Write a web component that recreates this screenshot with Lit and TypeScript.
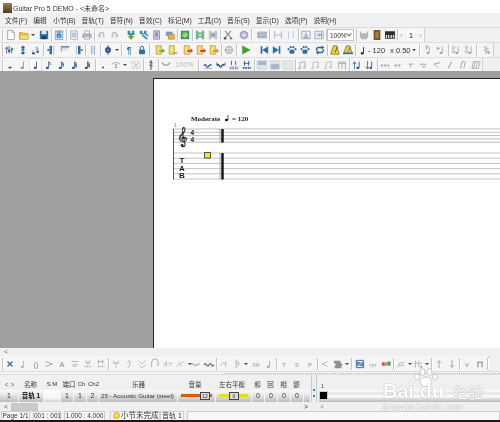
import { LitElement, html, css, svg } from "lit";
import { customElement } from "lit/decorators.js";

const BLUE = "#2a6ea6", TEAL = "#3c8fa6", NAVY = "#2f4f80", DG = "#8a8a8a";

const note = (c: string, flags = 0, x = 5) => svg`
  <ellipse cx=${x} cy="9.5" rx="1.8" ry="1.3" fill=${c}/>
  <path d="M${x + 1.6} 9.5V2" stroke=${c} stroke-width="1" fill="none"/>
  ${flags > 0 ? svg`<path d="M${x + 1.6} 2q3 2 2 4" stroke=${c} fill="none"/>` : ""}
  ${flags > 1 ? svg`<path d="M${x + 1.6} 4q3 2 2 4" stroke=${c} fill="none"/>` : ""}
  ${flags > 2 ? svg`<path d="M${x + 1.6} 6q2.5 1 2 3" stroke=${c} fill="none"/>` : ""}`;
const yellowDoc = (c: string) => svg`
  <path d="M1.5 1h6v10h-6z" fill="#f6df7a" stroke="#b89a30"/>
  <path d="M5 6h4V4l3 3-3 3V8H5z" fill=${c}/>`;
const beam = (c: string) => svg`
  <path d="M2.5 3v7M8.5 2v7M2.5 3l6-1" stroke=${c} fill="none" stroke-width="1.2"/>
  <ellipse cx="1.6" cy="10" rx="1.5" ry="1.1" fill=${c}/><ellipse cx="7.6" cy="9" rx="1.5" ry="1.1" fill=${c}/>`;
const paw = svg`<ellipse cx="6" cy="8" rx="3.2" ry="2.6" fill=${BLUE}/>
  <circle cx="1.8" cy="5" r="1.3" fill=${BLUE}/><circle cx="4.4" cy="2.6" r="1.3" fill=${BLUE}/>
  <circle cx="7.6" cy="2.6" r="1.3" fill=${BLUE}/><circle cx="10.2" cy="5" r="1.3" fill=${BLUE}/>`;
const gtxt = (t: string, c = DG, size = 6) => svg`<text x="6" y="9" text-anchor="middle" font-size=${size} font-family="Liberation Sans" fill=${c} font-weight="bold">${t}</text>`;

const ICONS: Record<string, unknown> = {
  doc: svg`<path d="M2 .5h5.5l2.5 2.5v8.500H2z" fill="#fff" stroke="#9a9a9a"/><path d="M7.500.5V3H10" fill="#ddd" stroke="#9a9a9a"/>`,
  folder: svg`<path d="M.5 3h4l1 1h5v7H.5z" fill="#e6c64a" stroke="#c7a52c"/><path d="M2 6h10l-1.500 5H.5z" fill="#f7e27a" stroke="#d1b238"/>`,
  save: svg`<path d="M1 1h10v10H1z" fill=${BLUE}/><path d="M3 1h6v4H3z" fill="#dfe9f3"/><path d="M3.500 7.500h5V11h-5z" fill="#173f66"/>`,
  info: svg`<path d="M1.500 1h9v10.500h-9z" fill="#cfe0f0" stroke="#7fa3c4"/><circle cx="6" cy="7" r="3" fill="#2f80c8"/><path d="M3 2.500h6" stroke=${BLUE}/><path d="M6 6v3" stroke="#fff"/>`,
  gdoc: svg`<path d="M2 1h8v10.500H2z" fill="#e9eef2" stroke="#a8b4bf"/><path d="M4 4h4v4H4z" fill="none" stroke="#a8b4bf"/><path d="M6 2.500v7M3.500 6h5" stroke="#b9c3cc"/>`,
  print: svg`<path d="M3 1h6v4H3z" fill="#f2f2f2" stroke="#aaa"/><path d="M1 5h10v4H1z" fill="#b4bcc4" stroke="#9aa3ab"/><path d="M3 8h6v3H3z" fill="#f2f2f2" stroke="#aaa"/>`,
  undo: svg`<path d="M3 9V5.500A2.500 2.500 0 0 1 8 5.500V9" stroke="#c2c2c2" stroke-width="2" fill="none"/><path d="M.5 6l2.500 3 2.500-3z" fill="#c2c2c2"/>`,
  redo: svg`<path d="M3 9V5.500A2.500 2.500 0 0 1 8 5.500V9" stroke="#c2c2c2" stroke-width="2" fill="none"/><path d="M5.500 6l2.500 3 2.500-3z" fill="#c2c2c2"/>`,
  addn: svg`<path d="M2 1h3v3h2V1h3v5H2z" fill=${TEAL}/><path d="M6 5v6M3 8h6" stroke="#55a530" stroke-width="2.400"/>`,
  arrn: svg`<path d="M1 1h3v3h2V1h3v4H1z" fill=${TEAL}/><path d="M4 6l6 5" stroke="#4b86c4" stroke-width="2.200"/><path d="M7 5h4v3z" fill="#4b86c4"/>`,
  pn: svg`<path d="M2 1h7v10H2z" fill="#c9c4e2" stroke="#8f88bd"/><path d="M4 3h3v5H4z" fill="#7a8fc0"/>`,
  on: svg`<path d="M1 2h8v5H1z" fill="#6ba0c4"/><path d="M4 5h7v6H4z" fill="#f0b050" stroke="#c88a2c"/>`,
  gchk: svg`<path d="M1 1h10v10H1z" fill="#3a8f7a"/><circle cx="6" cy="6" r="3.500" fill="#6ed04a"/><path d="M4 6l1.500 1.500L8 4.500" stroke="#fff" fill="none"/>`,
  splus: svg`<path d="M1 1h3v2h4V1h3v10H8V9H4v2H1z" fill="#7fa9b8"/><circle cx="6" cy="6" r="3" fill="#62b840"/><path d="M6 4v4M4 6h4" stroke="#fff"/>`,
  sx: svg`<path d="M1 1h3v2h4V1h3v10H8V9H4v2H1z" fill="#b9c2c6"/><path d="M4 4l4 4M8 4l-4 4" stroke="#8f989c" stroke-width="1.500"/>`,
  scis: svg`<path d="M2.500 1L9 9M9.500 1L3 9" stroke="#7a8a96" stroke-width="1.300"/><circle cx="2.500" cy="10" r="1.600" fill="#555"/><circle cx="9.500" cy="10" r="1.600" fill="#c8762c"/>`,
  gear: svg`<circle cx="6" cy="6" r="4.500" fill="#b3b3dc" stroke="#9090c2" stroke-width="1.500" stroke-dasharray="2 1"/><circle cx="6" cy="6" r="2" fill="#e4e4f4"/>`,
  grid: svg`<path d="M1 2.500h10v7H1z" fill="#d7dfe6" stroke="#8fa1b2"/><path d="M1 6h10M1 4.200h10M1 7.800h10" stroke="#8fa1b2"/>`,
  hbar: svg`<path d="M2 1.500v9M10 1.500v9M2 6h8" stroke="#a8bbd0" stroke-width="1.200" fill="none"/>`,
  ibar: svg`<path d="M3 1.500v9M8.500 1.500v9" stroke="#b4c2d2" stroke-width="1" fill="none"/>`,
  dnbox: svg`<path d="M1 1.500h10v9H1z" fill="#eef2f6" stroke="#8fa5ba"/><path d="M6 3v4M4 5.500L6 8l2-2.500M3 9h6" stroke="#6f8aa4" fill="none"/>`,
  rtbox: svg`<path d="M1 1.500h10v9H1z" fill="#eef2f6" stroke="#8fa5ba"/><path d="M3 6h4M5.500 4L8 6 5.500 8M9 3v6" stroke="#6f8aa4" fill="none"/>`,
  cat: svg`<path d="M1 1l2.500 3h5L11 1v7l-2 3H3L1 8z" fill="#b6b6b6"/>`,
  wood: svg`<path d="M2 0h8v12H2z" fill="#7a5322"/><path d="M4 2h4v8H4z" fill="#a87a3c"/>`,
  piano: svg`<path d="M0 1.500h12v9H0z" fill="#2e2e2e"/><path d="M1 6h1.500v3.500H1zM3.700 6h1.500v3.500H3.700zM6.800 6h1.500v3.500H6.800zM9.500 6H11v3.500H9.500z" fill="#e6e6e6"/>`,
  chord: svg`<path d="M2 2v8M5 1v9M8 3v7" stroke=${NAVY} fill="none"/><circle cx="2" cy="4" r="1.500" fill=${TEAL}/><circle cx="5" cy="7" r="1.500" fill=${NAVY}/><circle cx="8.500" cy="5" r="1.500" fill=${TEAL}/>`,
  eigh: svg`<path d="M6 0v12" stroke="#a8b4bf"/><ellipse cx="6" cy="3" rx="2" ry="1.500" fill=${NAVY}/><ellipse cx="6" cy="6" rx="2" ry="1.500" fill=${TEAL}/><ellipse cx="6" cy="9.500" rx="2" ry="1.500" fill=${NAVY}/>`,
  dot3: svg`<path d="M2 11V5M6 8V2" stroke="#5a7a9c" stroke-dasharray="1 1"/><circle cx="3" cy="10" r="1.500" fill=${NAVY}/><circle cx="8" cy="8" r="1.500" fill=${NAVY}/><path d="M6 2q3 1 2 4" stroke="#5a7a9c" fill="none"/>`,
  bl: svg`<path d="M3 1h3v10H3z" fill=${BLUE}/><path d="M7.500 1h1v10h-1z" fill="#9bb9d4"/><path d="M.5 5h2v2h-2z" fill=${NAVY}/>`,
  btop: svg`<path d="M1 1h1.200v7H1z" fill="#7da3c4"/><path d="M2 1.500h9v1.500H2z" fill=${BLUE}/><path d="M3 5h6" stroke="#9bb9d4"/>`,
  br: svg`<path d="M6 1h3v10H6z" fill=${BLUE}/><path d="M3.500 1h1v10h-1z" fill="#9bb9d4"/><path d="M9.500 5h2v2h-2z" fill=${NAVY}/>`,
  bs: svg`<path d="M4 1h1.200v10H4zM7 1h1.200v10H7z" fill="#7da3c4"/>`,
  dots: svg`<circle cx="6" cy="6" r="3.500" fill=${NAVY}/><circle cx="6" cy="6" r="1.300" fill="#c4d4e4"/><path d="M6 0v12" stroke=${NAVY}/>`,
  pil: svg`<text x="6" y="10" text-anchor="middle" font-size="10" font-weight="bold" font-family="Liberation Sans" fill=${BLUE}>¶</text>`,
  lock: svg`<path d="M2.500 5.500h7V11h-7z" fill=${BLUE}/><path d="M4 5.500V3.500a2 2 0 0 1 4 0v2" stroke=${BLUE} fill="none" stroke-width="1.200"/>`,
  ygreen: yellowDoc("#6ab52a"),
  yline: svg`<path d="M1.500 1h6v10h-6z" fill="#f6df7a" stroke="#b89a30"/><path d="M6 9h5v1.500H6z" fill="#888"/>`,
  yred: yellowDoc("#e0452c"),
  yred2: yellowDoc("#d83a3a"),
  yorange: yellowDoc("#ec8a2a"),
  circ: svg`<path d="M.5 5h11v2.500H.5z" fill="#c8c8c8"/><circle cx="6" cy="6" r="4" fill="none" stroke="#b4b4b4" stroke-width="1.500"/><path d="M6 1v10" stroke="#b4b4b4"/>`,
  play: svg`<path d="M1.500 .5L11.500 6l-10 5.500z" fill="#3ea52a"/>`,
  prev: svg`<path d="M2 1.500h2v9H2zM11 1.500v9L4 6z" fill=${BLUE}/>`,
  next: svg`<path d="M8 1.500h2v9H8zM1 1.500v9L8 6z" fill=${BLUE}/>`,
  paw,
  loop: svg`<path d="M2 7V5a2 2 0 0 1 2-2h5" stroke=${BLUE} stroke-width="1.800" fill="none"/><path d="M10 5v2a2 2 0 0 1-2 2H3" stroke=${BLUE} stroke-width="1.800" fill="none"/><path d="M8 .5l3 2.500-3 2.500zM4 6.500L1 9l3 2.500z" fill=${NAVY}/>`,
  met: svg`<path d="M4 1h4l3 10H1z" fill="#f0d030" stroke="#8a7a2a"/><path d="M6 9l3-7" stroke="#444"/>`,
  met2: svg`<path d="M4 1h4l3 9H1z" fill="#f0d030" stroke="#7a7a5a"/><path d="M0 10h12" stroke="#3c6ea8" stroke-width="2"/><path d="M6 8l3-6" stroke="#3c6ea8"/>`,
  mn1: svg`<path d="M4 1.500h1v3H4zM3 1.500h3" stroke="#9aa4ae" fill="none"/>${note("#9aa4ae", 0, 6)}`,
  mn2: svg`<path d="M1 2l4 2-4 2z" fill="#9aa4ae"/>${note("#9aa4ae", 0, 6)}`,
  mn3: svg`<circle cx="3" cy="3" r="1.500" fill="none" stroke="#9aa4ae"/><circle cx="3" cy="8" r="1.500" fill="none" stroke="#9aa4ae"/>${note("#9aa4ae", 0, 7)}`,
  mn5: svg`<path d="M5 1v10M2 3l6 2M2 6l6 2" stroke="#9aa4ae" fill="none"/><circle cx="8" cy="9" r="1.500" fill="#9aa4ae"/>`,
  n0: svg`<ellipse cx="6" cy="9" rx="1.800" ry="1.200" fill=${NAVY}/>`,
  n2: note("#7a8fa8"),
  n4: note(NAVY),
  n8: note(NAVY, 1, 4),
  n16: note(NAVY, 2, 4),
  n32: note(NAVY, 3, 4),
  n64: note("#24466f", 3, 4),
  dot: svg`<circle cx="6" cy="9" r="1.200" fill=${NAVY}/>`,
  tup: svg`<path d="M1 5q5-4 10 0" stroke="#8ca2b8" fill="none"/><text x="6" y="10" text-anchor="middle" font-size="6" font-family="Liberation Sans" fill=${BLUE}>3</text>`,
  rest: svg`<path d="M1 2h10v8H1z" fill="none" stroke="#c2c2c2" stroke-dasharray="2 1"/><path d="M3 3l6 6M9 3l-6 6" stroke="#b4b4b4"/>`,
  flip: svg`<path d="M6 0v12M4 2.500l4 1M4 6l4 1" stroke=${NAVY} stroke-width="1.200"/>`,
  slur: svg`<path d="M1 3q5 7 10 0" stroke=${DG} stroke-width="1.300" fill="none"/>`,
  bxa: svg`<path d="M1 7q2-3 3 0t3 0 3 0" stroke=${NAVY} fill="none" stroke-width="1.400"/><path d="M2 10h9" stroke="#8ca2b8"/>`,
  bxb: svg`<path d="M1 7q2-3 3 0t3 0 3 0" stroke=${NAVY} fill="none" stroke-width="1.800"/><path d="M1 3v3M11 3v3" stroke=${NAVY}/>`,
  bxc: svg`<path d="M3 1v5M8 1v5" stroke=${NAVY}/><path d="M1 8.500h10M1 10.500h10" stroke=${NAVY} stroke-dasharray="2 1"/>`,
  bxd: svg`<path d="M3 1v6M8 1v6M2 4h7" stroke=${NAVY} fill="none"/><path d="M1 9.500h10" stroke=${NAVY} stroke-width="2" stroke-dasharray="2 1"/>`,
  box1: svg`<path d="M0 1h12v10H0z" fill="#dde3ea" stroke="#cfd6de"/><path d="M1 1h10v5H1z" fill="#a8b8cc"/>`,
  box2: svg`<path d="M0 1h12v10H0z" fill="#dde3ea" stroke="#cfd6de"/><path d="M1 5h10v6H1z" fill="#a8b8cc"/>`,
  box3: svg`<path d="M0 1h12v10H0z" fill="#e3e8ee" stroke="#cfd6de"/>`,
  bn1: beam("#aab4be"), bn2: beam("#b8c0c8"),
  rr: svg`<path d="M1 2.500h10M1 4h10" stroke="#9aa4ae"/><path d="M2 4v7M6 4v7M10 4v7" stroke="#9aa4ae"/>`,
  arup: svg`<path d="M3 11V3M1 5l2-3 2 3" stroke=${BLUE} fill="none"/>${note(NAVY, 0, 7)}`,
  ardn: svg`<path d="M3 1v9M1 8l2 3 2-3" stroke=${BLUE} fill="none"/><path d="M8 2v7" stroke=${NAVY}/><circle cx="7" cy="9.500" r="1.400" fill=${NAVY}/>`,
  ff: svg`<path d="M1 6h3M5 6h3M9 6h2" stroke="#a0a8b0" stroke-width="1.500"/><path d="M1 6l2 3M5 6l2 3M9 6l2 3" stroke="#a0a8b0"/>`,
  f2: svg`<path d="M2 6h3M6 6h3" stroke="#a0a8b0" stroke-width="1.500"/><path d="M2 6l2 3M6 6l2 3" stroke="#a0a8b0"/>`,
  f1: svg`<path d="M4 5h4" stroke="#a0a8b0" stroke-width="1.500"/><path d="M4 5l2 4" stroke="#a0a8b0"/>`,
  f3: svg`<path d="M1 5h8M4 8h4" stroke="#a0a8b0" stroke-width="1.300"/>`,
  f4: svg`<path d="M2 5l8-2M3 5l4 4" stroke="#a0a8b0" stroke-width="1.200" fill="none"/>`,
  f5: svg`<path d="M4 10l4-8" stroke="#a0a8b0" stroke-width="1.300"/>`,
  f6: svg`<path d="M3 10l2-8h3M7 10l2-8" stroke="#a0a8b0" stroke-width="1.200" fill="none"/>`,
  f7: svg`<path d="M1 10l2-8h8l-2 8zM5 2l-2 8M8 2l-2 8" stroke="#a0a8b0" fill="none"/>`,
  xx: svg`<path d="M3 3l6 6M9 3l-6 6" stroke=${BLUE} stroke-width="1.500"/>`,
  ln: note("#b8b0a0"),
  par: gtxt("()", "#a8a8a8", 9),
  acc: svg`<path d="M2 3l8 3-8 3" stroke="#a8a8a8" fill="none" stroke-width="1.200"/>`,
  aa: gtxt("A", "#a8a8a8", 9),
  h1: svg`<path d="M2 3h8" stroke="#a8a8a8"/><text x="6" y="10" text-anchor="middle" font-size="6" font-family="Liberation Sans" fill="#a0a8b0">ah</text>`,
  h2: svg`<path d="M3 2l3 2 3-2M3 4l3 2 3-2" stroke="#a0a8b0" fill="none"/><path d="M2 9h8" stroke="#a0a8b0" stroke-width="2" stroke-dasharray="1.500 1"/>`,
  h3: svg`<path d="M3 1v5M8 1v5M2 3h7" stroke="#a0a8b0" fill="none"/><path d="M2 9h8" stroke="#a0a8b0" stroke-width="2" stroke-dasharray="1.500 1"/>`,
  j1: svg`<path d="M2 2l4 3 4-3M2 5h8M6 5v6" stroke="#b4b4b4" fill="none"/>`,
  j2: svg`<path d="M4 11q5-3 2-9M6 2L3.500 4M6 2l2.500 2" stroke="#b4b4b4" fill="none"/>`,
  j3: svg`<path d="M2 2l4 4 4-4M2 7l4 4 4-4" stroke="#b4b4b4" fill="none"/>`,
  j4: svg`<path d="M2 10V4a3 3 0 0 1 8 0v4l-2-2" stroke="#b4b4b4" fill="none" stroke-width="1.200"/>`,
  j5: svg`<path d="M1 9l3-6v6M7 5h4l-4 4" stroke="#b4b4b4" fill="none"/>`,
  j6: svg`<path d="M1 9l4-5 1 5M7 4h3" stroke="#b4b4b4" fill="none"/>`,
  w1: svg`<path d="M1 7q1.500-3 3 0t3 0 3 0" stroke="#7a8288" fill="none" stroke-width="1.200"/>`,
  w2: svg`<path d="M0 7q1.500-3 3 0t3 0 3 0 3 0" stroke="#596a74" fill="none" stroke-width="1.500"/>`,
  l1: svg`<path d="M2 8l3-4 4 2M8 3v6" stroke="#b4b4b4" fill="none"/>`,
  l2: svg`<path d="M5 1v10M5 3q5 1 2 5" stroke="#b4b4b4" fill="none" stroke-width="1.300"/>`,
  rm: gtxt("RM", "#bdbdbd", 5.5),
  sn: note("#a8a8a8"),
  tt: gtxt("T", "#aaa", 7), ss: gtxt("S", "#aaa", 7), pp: gtxt("P", "#aaa", 7),
  lt: svg`<path d="M9 3L3 6l6 3" stroke="#aaa" fill="none"/>`,
  stack: svg`<path d="M1 2h8v3H1zM3 5h8v3H3zM2 8h8v3H2z" fill="#8b9094"/>`,
  bb: svg`<path d="M1 1h10v10H1z" fill="#5c87b8"/><path d="M3 3h6L3 9h6" stroke="#fff" fill="none"/>`,
  txt: gtxt("TXT", "#aaa", 5),
  rgb: svg`<path d="M1 4h3.500v4H1z" fill="#e04a3a"/><path d="M4.500 4H8v4H4.500z" fill="#999"/><path d="M8 3h3.500v5H8z" fill="#4aa83a"/>`,
  up: svg`<path d="M6 11V2M3.500 4.500L6 2l2.500 2.500" stroke="#9a9a9a" fill="none"/>`,
  dn: svg`<path d="M6 1v9M3.500 7.500L6 10l2.500-2.500" stroke="#9a9a9a" fill="none"/>`,
  vv: gtxt("V", "#aaa", 7),
  sq: svg`<path d="M2.500 3h7v7h-2V5h-3v5h-2z" fill="#aaa"/>`,
  gf: svg`<path d="M2 10l3-6 3 2 2-3M3 8h7" stroke="#aab0b4" fill="none"/>`,
  gn: svg`<path d="M3 2v8M7 2v8M1 5h10" stroke="#aab0b4" fill="none"/><path d="M9 8h2v3H9z" fill="#aab0b4"/>`,
};

const ROW1 = "_1 | _1 doc folder dd _1 save | info | gdoc print | undo redo _3 addn arrn pn on | gchk | splus sx | scis _3 gear | _3 grid | _1 hbar ibar | dnbox rtbox | ZOOM | cat wood piano | PAGER";
const ROW2 = "_1 | chord eigh dot3 | _1 bl btop br | bs | dots dd | pil lock | _3 ygreen yline _2 yred yred2 yorange | circ | _2 play _5 prev next _2 paw paw _2 loop | met met2 | SPEED | _1 mn1 mn2 | mn3 mn3 | _3 mn5";
const ROW3 = "_1 | n0 n2 N4S n8 n16 n32 n64 | dot tup dd _1 rest | flip | slur PCT | _2 bxa bxb bxc bxd | box1 box2 box3 | bn1 bn2 bn2 rr | arup ardn | ff f2 f1 f3 f4 f5 f6 f7";
const ROW4 = "_1 | xx ln par acc aa h1 h2 h3 | j1 j2 j3 j4 j5 j6 dd <4 w1 w2 | l1 l2 dd rm sn | tt ss pp | lt stack dd | _1 bb txt rgb | gf dd <2 gn dd | up dn | vv sq |";

@customElement("app-root")
export class AppRoot extends LitElement {
  static styles = css`
    :host { display: block; width: 500px; height: 422px; overflow: hidden; }
    * { box-sizing: border-box; }
    .app { position: relative; width: 500px; height: 422px; display: flex; flex-direction: column; background: #f0f0f0; filter: blur(0.4px);
      font-family: "Liberation Sans", "Noto Sans CJK SC", sans-serif; color: #222; font-size: 8.5px; }
    .app > * { flex: none; }
    .title { height: 13px; background: #fff; display: flex; align-items: center; gap: 1px; padding: 2px 0 0 3px; font-size: 7px; color: #333; white-space: pre; }
    .logo { width: 9px; height: 10px; background: linear-gradient(#a08050, #4a3a28); }
    .menu { height: 14px; display: flex; align-items: center; gap: 6px; padding-left: 5px; background: #f1f1f1; font-size: 6.8px; color: #333; white-space: nowrap; }
    .rows { height: 44px; border-top: 1px solid #dcdcdc; }
    .tb { height: 15px; display: flex; align-items: center; border-bottom: 1px solid #dedede; }
    .rows .tb:last-child { height: 13px; border-bottom: 0; }
    .tb .wrap { display: flex; align-items: center; height: 100%; background: #f5f5f5; border-right: 1px solid #d0d0d0; }
    .ic { width: 13px; height: 13px; flex: none; display: flex; align-items: center; justify-content: center; }
    .ic svg { width: 10px; height: 10px; display: block; overflow: visible; }
    .sel { background: #fff; box-shadow: inset 0 0 0 1px #e2e2e2; }
    .sep { width: 1px; height: 12px; margin: 0 .5px; flex: none; background: #c4c4c4; box-shadow: 1px 0 0 #fff; }
    .dd { width: 6px; height: 13px; flex: none; display: flex; align-items: center; justify-content: center; }
    .dd::after { content: ""; border: 2px solid transparent; border-top: 2.5px solid #444; border-bottom: 0; }
    .zoom { width: 27px; height: 12px; border: 1px solid #c6c6c6; background: #fff; display: flex; align-items: center; justify-content: space-between; padding: 0 2px; font-size: 6.5px; color: #333; margin: 0 1px 0 0; flex: none; }
    .chev { width: 4px; height: 4px; border-right: 1px solid #666; border-bottom: 1px solid #666; transform: rotate(45deg) translate(-1px,-1px); flex: none; }
    .pager { display: flex; align-items: center; width: 26px; justify-content: space-around; color: #aaa; font-size: 8px; flex: none; }
    .pager b { color: #222; font-weight: normal; background: #fff; padding: 0 2px; }
    .speed { width: 62px; flex: none; display: flex; align-items: center; font-size: 7.5px; color: #333; padding-left: 2px; white-space: nowrap; }
    .speed svg { width: 10px; height: 11px; flex: none; }
    .speed .mult { margin-left: 5px; font-size: 7.5px; }
    .pct { width: 25px; flex: none; color: #bbb; font-size: 7px; text-align: center; }
    .canvas { height: 277px; background: #a0a0a0; padding: 7px 0 0 153px; display: flex; }
    .page { flex: 1; background: #fff; border-left: 1px solid #222; border-top: 1px solid #222; }
    .page svg { display: block; width: 346px; height: 270px; }
    .hs { height: 8px; font-size: 7px; color: #777; padding-left: 4px; line-height: 8px; background: #f0f0f0; }
    .bot .tb { height: 15px; border-bottom: 0; background: #f0f0f0; }
    .bot .wrap { border-right: 1px solid #ccc; }
    .div { height: 4px; background: #f4f4f4; border-top: 1px solid #ddd; border-bottom: 1px solid #e0e0e0; padding-left: 225px; display: flex; align-items: center; }
    .div i { flex: 1; border-top: 1px dotted #a9bfd8; }
    .tracks { display: flex; height: 27px; }
    .left { width: 311px; flex: none; display: flex; flex-direction: column; }
    .hdr { height: 15px; display: flex; align-items: center; font-size: 6.5px; color: #333; padding-top: 3px; white-space: nowrap; }
    .trk { height: 12px; display: flex; font-size: 7px; color: #333; white-space: nowrap; }
    .c { flex: none; text-align: center; }
    .small { font-size: 6px; }
    .back { color: #666; }
    .trk .c { background: linear-gradient(#fafafa, #e8e8e8 40%, #bcbcbc); border-right: 1px solid #f4f4f4; line-height: 11px; overflow: hidden; position: relative; }
    .trk .white { background: linear-gradient(#fff, #f4f4f4 70%, #cfcfcf); }
    .trk .b { font-weight: bold; color: #111; font-size: 6.5px; }
    .trk .inst { text-align: left; padding-left: 2px; font-size: 6.2px; color: #333; }
    .line { position: absolute; left: 3px; right: 3px; top: 4px; height: 3px; }
    .orange { background: #d85a10; }
    .yellow { background: #e8e000; }
    .knob { position: absolute; top: 2px; width: 10px; height: 8px; background: #ddd; border: 1px solid #444; font-size: 5px; line-height: 6px; }
    .split { width: 6px; flex: none; background: #eee; border-left: 1px solid #ccc; border-right: 1px solid #ccc; display: flex; flex-direction: column; align-items: center; justify-content: flex-end; gap: 4px; padding-bottom: 5px; }
    .split i { width: 2px; height: 2px; background: #3a8ad0; display: block; }
    .tl { flex: 1; display: flex; flex-direction: column; padding-left: 2px; }
    .tl .n { height: 15px; font-size: 5px; padding: 9px 0 0 2px; color: #333; line-height: 5px; }
    .tl .r { height: 12px; background: linear-gradient(#fff 0, #e4e4e4 30%, #fff 50%, #b8b8b8); padding: 2px 0 0 1px; }
    .tl .r i { display: block; width: 7px; height: 7px; background: #000; box-shadow: 0 0 0 1px #ccc; }
    .sb { height: 9px; display: flex; align-items: center; font-size: 7px; color: #555; background: #f0f0f0; }
    .thumb { width: 27px; height: 8px; background: #c9c9c9; margin-left: 3px; }
    .sb .l { padding-left: 4px; }
    .sb .g { margin-left: 266px; color: #333; }
    .sb .h { margin-left: 12px; color: #888; }
    .status { height: 9px; display: flex; gap: 3px; font-size: 6.5px; color: #333; white-space: nowrap; background: #f0f0f0; padding-left: 1px; }
    .status span { background: #f8f8f8; border: 1px solid #ccc; border-bottom: 0; text-align: center; flex: none; line-height: 8px; }
    .status .msg { text-align: left; padding-left: 2px; font-size: 7.5px; margin-left: 2px; }
    .status .trkname { font-size: 7px; margin-left: -3px; }
    .status .fill { flex: 1; }
    .dot { display: inline-block; width: 7px; height: 7px; border-radius: 50%; background: radial-gradient(#ffe680, #e0a010); vertical-align: -1px; margin-right: 1px; }
    .blk { height: 2px; background: #1a1a1a; }
    .wm { position: absolute; left: 383px; top: 368px; width: 117px; height: 54px; color: #fff; pointer-events: none; text-shadow: 0 0 1px #aaa, 0 0 1px #aaa; }
    .wm .big { position: absolute; left: 0; top: 12px; font-size: 20px; line-height: 22px; font-weight: bold; white-space: nowrap; }
    .wm .cn { font-family: "Noto Sans CJK SC", sans-serif; font-size: 15px; font-weight: normal; margin-left: 9px; }
    .wm .url { position: absolute; left: 0; top: 33px; font-size: 9.5px; letter-spacing: .2px; white-space: nowrap; }
    .wm svg { position: absolute; left: 30px; top: 0; width: 26px; height: 20px; }
  `;

  private item(t: string) {
    if (t === "|") return html`<div class="sep"></div>`;
    if (t === "dd") return html`<div class="dd"></div>`;
    if (t.startsWith("_")) return html`<div style="width:${Number(t.slice(1))}px;flex:none"></div>`;
    if (t.startsWith("<")) return html`<div style="margin-right:-${Number(t.slice(1))}px;flex:none"></div>`;
    if (t === "ZOOM") return html`<div class="zoom">100%<div class="chev"></div></div>`;
    if (t === "PAGER") return html`<div class="pager">‹<b>1</b>›</div>`;
    if (t === "PCT") return html`<div class="pct">100%</div>`;
    if (t === "SPEED")
      return html`<div class="speed"><svg viewBox="0 0 12 12">${note("#222")}</svg>- 120<span class="mult">x 0.50</span><div class="dd"></div></div>`;
    const sel = t === "N4S";
    const name = sel ? "n4" : t;
    return html`<div class="ic ${sel ? "sel" : ""}"><svg viewBox="0 0 12 12">${ICONS[name]}</svg></div>`;
  }
  private row(s: string) {
    return html`<div class="tb"><div class="wrap">${s.split(" ").map((t) => this.item(t))}</div></div>`;
  }

  render() {
    const staff = [129, 132.3, 135.6, 138.9, 142.2];
    const tab = [153, 158.2, 163.4, 168.6, 173.8, 179];
    return html`<div class="app">
      <div class="title"><div class="logo"></div>Guitar Pro 5 DEMO - &lt;未命名&gt;</div>
      <div class="menu">
        ${["文件(F)", "编辑", "小节(B)", "音轨(T)", "音符(N)", "音效(C)", "标记(M)", "工具(O)", "音乐(S)", "显示(D)", "选项(P)", "说明(H)"].map((m) => html`<span>${m}</span>`)}
      </div>
      <div class="rows">${this.row(ROW1)}${this.row(ROW2)}${this.row(ROW3)}</div>
      <div class="canvas">
        <div class="page">
          <svg viewBox="154 79 346 270">
            <text x="191" y="120.500" font-family="Liberation Serif" font-size="7" font-weight="bold" fill="#222">Moderate</text>
            <ellipse cx="226.500" cy="120" rx="1.600" ry="1.200" fill="#111"/><path d="M228 120v-5" stroke="#111" stroke-width=".7"/>
            <text x="232" y="120.500" font-family="Liberation Serif" font-size="7" font-weight="bold" fill="#222">= 120</text>
            <text x="174" y="127" font-family="Liberation Sans" font-size="5" fill="#e05050">1</text>
            ${staff.map((y) => svg`<path d="M173 ${y}H500" stroke="#bdbdbd" stroke-width="1"/>`)}
            ${tab.map((y) => svg`<path d="M173 ${y}H500" stroke="#c4c4c4" stroke-width="1"/>`)}
            <path d="M173.500 129V179.500" stroke="#555" stroke-width="1"/>
            <path d="M222.500 129V142.500M222.500 153V179.500" stroke="#111" stroke-width="2.400"/>
            <path d="M220 129V142.500M220 153V179.500" stroke="#888" stroke-width=".7"/>
            <text x="177" y="142" font-family="DejaVu Sans" font-size="18" fill="#222" stroke="#222" stroke-width=".3">𝄞</text>
            <text x="190.500" y="135" font-family="Liberation Sans" font-size="6.500" font-weight="bold" fill="#222">4</text>
            <text x="190.500" y="141.500" font-family="Liberation Sans" font-size="6.500" font-weight="bold" fill="#222">4</text>
            <g font-family="Liberation Sans" font-size="8" font-weight="bold" fill="#222" text-anchor="middle">
              <text x="182" y="163">T</text><text x="182" y="170.500">A</text><text x="182" y="178">B</text>
            </g>
            <rect x="204.500" y="152.500" width="6" height="5.500" fill="#f7ec00" stroke="#555" stroke-width="1"/>
          </svg>
        </div>
      </div>
      <div class="bot">
        <div class="hs">&lt;</div>
        ${this.row(ROW4)}
        <div class="div"><i></i></div>
        <div class="tracks">
          <div class="left">
            <div class="hdr">
              <div class="c back" style="width:19px">&lt; &gt;</div>
              <div class="c" style="width:23px">名称</div>
              <div class="c small" style="width:20px">S M</div>
              <div class="c" style="width:14px">端口</div>
              <div class="c small" style="width:11px">Ch</div>
              <div class="c small" style="width:13px">Ch2</div>
              <div class="c" style="width:77px">乐器</div>
              <div class="c" style="width:36px">音量</div>
              <div class="c" style="width:38px">左右平衡</div>
              <div class="c" style="width:13px">和</div>
              <div class="c" style="width:13px">回</div>
              <div class="c" style="width:13px">相</div>
              <div class="c" style="width:13px">颤</div>
            </div>
            <div class="trk">
              <div class="c" style="width:19px">1</div>
              <div class="c b" style="width:25px">音轨 1</div>
              <div class="c white" style="width:17px"></div>
              <div class="c" style="width:13px">1</div>
              <div class="c" style="width:13px">1</div>
              <div class="c" style="width:12px">2</div>
              <div class="c inst" style="width:79px">25 - Acoustic Guitar (steel)</div>
              <div class="c" style="width:38px"><div class="line orange"></div><div class="knob" style="left:22px">12</div></div>
              <div class="c" style="width:36px"><div class="line yellow"></div><div class="knob" style="left:13px">0</div></div>
              <div class="c" style="width:13px">0</div>
              <div class="c" style="width:13px">0</div>
              <div class="c" style="width:13px">0</div>
              <div class="c" style="width:13px">0</div>
              <div class="c" style="width:7px"></div>
            </div>
          </div>
          <div class="split"><i></i><i></i></div>
          <div class="tl"><div class="n">1</div><div class="r"><i></i></div></div>
        </div>
        <div class="sb"><span class="l">&lt;</span><div class="thumb"></div><span class="g">&gt;</span><span class="h">&lt;</span></div>
        <div class="status">
          <span style="width:29px">Page 1/1</span>
          <span style="width:28px">001 : 001</span>
          <span style="width:41px">1.000 : 4.000</span>
          <span class="msg" style="width:50px"><i class="dot"></i>小节未完成</span>
          <span class="trkname" style="width:24px">音轨 1</span>
          <span class="fill"></span>
        </div>
        <div class="blk"></div>
      </div>
      <div class="wm">
        <svg viewBox="0 0 26 20"><g fill="#fff" stroke="#aaa" stroke-width=".6"><ellipse cx="13" cy="14" rx="6" ry="5"/><ellipse cx="4" cy="9" rx="2.500" ry="3"/><ellipse cx="9.500" cy="4" rx="2.500" ry="3.500"/><ellipse cx="16.500" cy="4" rx="2.500" ry="3.500"/><ellipse cx="22" cy="9" rx="2.500" ry="3"/></g></svg>
        <div class="big">Bai du<span class="cn">经验</span></div>
        <div class="url">jingyan.baidu.com</div>
      </div>
    </div>`;
  }
}
